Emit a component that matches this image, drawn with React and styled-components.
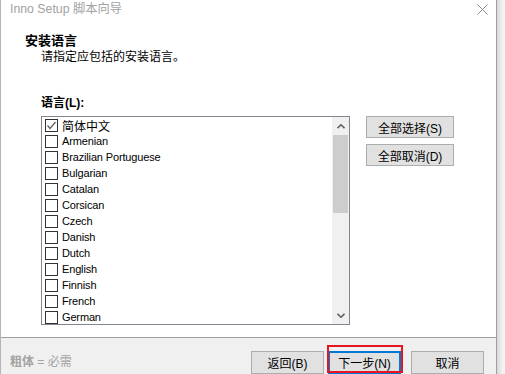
import React from "react";
import styled, { createGlobalStyle } from "styled-components";

const GlobalStyle = createGlobalStyle`
  html, body {
    margin: 0;
    padding: 0;
    background: #fff;
    overflow: hidden;
  }
  body {
    font-family: "Liberation Sans", "Noto Sans CJK SC", sans-serif;
    color: #000;
  }
`;

const Screen = styled.div`
  display: flex;
  width: 505px;
  height: 374px;
  overflow: hidden;
`;

const Window = styled.div`
  box-sizing: border-box;
  width: 497px;
  height: 374px;
  display: flex;
  flex-direction: column;
  background: #fff;
  border-left: 1px solid #b4b4b4;
  border-right: 1px solid #a0a0a0;
`;

const Shadow = styled.div`
  flex: 1;
  background: linear-gradient(to right, #d6d6d6, #ececec 50%, #f7f7f7);
`;

const TitleBar = styled.div`
  height: 30px;
  display: flex;
  justify-content: space-between;
  align-items: flex-start;
  padding: 0 8px 0 9px;
`;

const Title = styled.div`
  font-size: 12.3px;
  line-height: 17px;
  margin-top: 1px;
  color: #a2a2a2;
`;

const CloseIcon = styled.svg`
  margin-top: 4px;
`;

const Header = styled.div`
  padding: 3px 0 0 24px;
`;

const Heading = styled.div`
  font-size: 13px;
  font-weight: bold;
  line-height: 16px;
`;

const SubHeading = styled.div`
  font-size: 12px;
  line-height: 16px;
  padding-left: 16px;
`;

const Page = styled.div`
  flex: 1;
  padding: 30px 0 0 40px;
`;

const FieldLabel = styled.div`
  font-size: 12px;
  font-weight: bold;
  line-height: 16px;
`;

const Row = styled.div`
  display: flex;
  align-items: flex-start;
  gap: 16px;
  margin-top: 5px;
`;

const ListBox = styled.div`
  box-sizing: border-box;
  width: 309px;
  height: 209px;
  border: 1px solid #82878f;
  display: flex;
  overflow: hidden;
`;

const Items = styled.div`
  flex: 1;
  padding-left: 3px;
  overflow: hidden;
`;

const Item = styled.div`
  height: 16px;
  display: flex;
  align-items: center;
  gap: 4px;
  font-size: ${(p) => (p.$cjk ? "12px" : "11px")};
  letter-spacing: ${(p) => (p.$cjk ? "0" : "-0.15px")};
  white-space: nowrap;
`;

const Box = styled.span`
  box-sizing: border-box;
  width: 13px;
  height: 13px;
  flex: none;
  border: 1px solid #333;
  background: #fff;
  display: flex;
  align-items: center;
  justify-content: center;
`;

const ScrollBar = styled.div`
  width: 17px;
  display: flex;
  flex-direction: column;
  background: #f0f0f0;
`;

const Arrow = styled.div`
  height: 18px;
  display: flex;
  align-items: center;
  justify-content: center;
`;

const Track = styled.div`
  flex: 1;
  padding: 0 1px;
`;

const Thumb = styled.div`
  height: 78px;
  background: #cdcdcd;
`;

const SideButtons = styled.div`
  display: flex;
  flex-direction: column;
  gap: 6px;
`;

const Button = styled.button`
  box-sizing: border-box;
  width: ${(p) => p.$w || 73}px;
  height: ${(p) => p.$h || 23}px;
  padding: 0;
  margin: 0;
  margin-left: ${(p) => p.$push || 0}px;
  font-family: "Liberation Sans", "Noto Sans CJK SC", sans-serif;
  font-size: 12px;
  color: #000;
  background: #e1e1e1;
  border: ${(p) => (p.$focused ? "2px solid #0078d7" : "1px solid #adadad")};
  border-radius: 0;
  display: flex;
  align-items: center;
  justify-content: center;
`;

const Footer = styled.div`
  box-sizing: border-box;
  height: 37px;
  border-top: 1px solid #a0a0a0;
  background: #f0f0f0;
  display: flex;
  align-items: flex-start;
  padding: 13px 12px 0 9px;
`;

const Hint = styled.div`
  font-size: 12px;
  line-height: 23px;
  color: #a3a3a3;
  b {
    font-weight: bold;
  }
`;

const Buttons = styled.div`
  margin-left: auto;
  display: flex;
  gap: 4px;
`;

const Marked = styled.div`
  position: relative;
`;

const Highlight = styled.div`
  position: absolute;
  top: -6px;
  left: -1px;
  right: -2px;
  bottom: 1px;
  border: 2px solid #e8141e;
  pointer-events: none;
`;

const languages = [
  "Armenian",
  "Brazilian Portuguese",
  "Bulgarian",
  "Catalan",
  "Corsican",
  "Czech",
  "Danish",
  "Dutch",
  "English",
  "Finnish",
  "French",
  "German",
];

const Check = () => (
  <svg width="11" height="11" viewBox="0 0 11 11">
    <polyline points="1.5,5.5 4,8.5 9.5,2" fill="none" stroke="#5a5a5a" strokeWidth="1.2" />
  </svg>
);

const Chevron = ({ down }) => (
  <svg width="8" height="5" viewBox="0 0 8 5">
    <polyline
      points={down ? "0.5,0.8 4,4.2 7.5,0.8" : "0.5,4.2 4,0.8 7.5,4.2"}
      fill="none"
      stroke="#606060"
      strokeWidth="1.6"
    />
  </svg>
);

export default function App() {
  return (
    <Screen>
      <GlobalStyle />
      <Window>
        <TitleBar>
          <Title>Inno Setup 脚本向导</Title>
          <CloseIcon width="11" height="11" viewBox="0 0 11 11">
            <path d="M0.5 0.5 L10.5 10.5 M10.5 0.5 L0.5 10.5" stroke="#8a8a8a" strokeWidth="1" />
          </CloseIcon>
        </TitleBar>
        <Header>
          <Heading>安装语言</Heading>
          <SubHeading>请指定应包括的安装语言。</SubHeading>
        </Header>
        <Page>
          <FieldLabel>语言(L):</FieldLabel>
          <Row>
            <ListBox>
              <Items>
                <Item $cjk>
                  <Box>
                    <Check />
                  </Box>
                  简体中文
                </Item>
                {languages.map((name) => (
                  <Item key={name}>
                    <Box />
                    {name}
                  </Item>
                ))}
              </Items>
              <ScrollBar>
                <Arrow>
                  <Chevron />
                </Arrow>
                <Track>
                  <Thumb />
                </Track>
                <Arrow>
                  <Chevron down />
                </Arrow>
              </ScrollBar>
            </ListBox>
            <SideButtons>
              <Button $w={88} $h={22}>全部选择(S)</Button>
              <Button $w={88} $h={22}>全部取消(D)</Button>
            </SideButtons>
          </Row>
        </Page>
        <Footer>
          <Hint>
            <b>粗体</b> = 必需
          </Hint>
          <Buttons>
            <Button>返回(B)</Button>
            <Marked>
              <Button $focused>下一步(N)</Button>
              <Highlight />
            </Marked>
            <Button $push={6}>取消</Button>
          </Buttons>
        </Footer>
      </Window>
      <Shadow />
    </Screen>
  );
}
